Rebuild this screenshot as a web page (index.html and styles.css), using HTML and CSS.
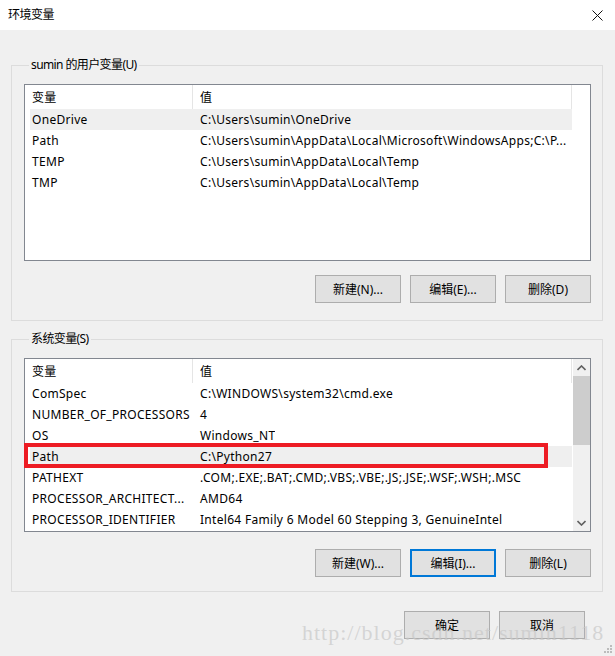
FILE: index.html
```html
<!DOCTYPE html>
<html lang="zh-CN">
<head>
    <meta charset="UTF-8">
    <meta name="viewport" content="width=device-width, initial-scale=1.0">
    <title>环境变量</title>
    <link rel="stylesheet" href="styles.css">
</head>
<body>
    <div class="titlebar">
        <span class="title">环境变量</span>
        <svg class="close" width="11" height="11" viewBox="0 0 11 11">
            <path d="M0.5 0.5 L10.5 10.5 M10.5 0.5 L0.5 10.5" stroke="#111" stroke-width="1" fill="none"/>
        </svg>
    </div>

    <div class="dialog">
        <fieldset class="group">
            <legend>sumin 的用户变量(U)</legend>
            <div class="list">
                <div class="list-main">
                    <div class="list-head">
                        <div class="col-name">变量</div>
                        <div class="col-value">值</div>
                    </div>
                    <div class="row selected"><div class="col-name">OneDrive</div><div class="col-value">C:\Users\sumin\OneDrive</div></div>
                    <div class="row"><div class="col-name">Path</div><div class="col-value">C:\Users\sumin\AppData\Local\Microsoft\WindowsApps;C:\P...</div></div>
                    <div class="row"><div class="col-name">TEMP</div><div class="col-value">C:\Users\sumin\AppData\Local\Temp</div></div>
                    <div class="row"><div class="col-name">TMP</div><div class="col-value">C:\Users\sumin\AppData\Local\Temp</div></div>
                </div>
                <div class="filler"></div>
            </div>
            <div class="buttons">
                <button class="btn">新建(N)...</button>
                <button class="btn">编辑(E)...</button>
                <button class="btn">删除(D)</button>
            </div>
        </fieldset>

        <fieldset class="group group-system">
            <legend>系统变量(S)</legend>
            <div class="list list-system">
                <div class="list-main">
                    <div class="list-head">
                        <div class="col-name">变量</div>
                        <div class="col-value">值</div>
                    </div>
                    <div class="row"><div class="col-name">ComSpec</div><div class="col-value">C:\WINDOWS\system32\cmd.exe</div></div>
                    <div class="row"><div class="col-name">NUMBER_OF_PROCESSORS</div><div class="col-value">4</div></div>
                    <div class="row"><div class="col-name">OS</div><div class="col-value">Windows_NT</div></div>
                    <div class="row selected"><div class="col-name">Path</div><div class="col-value">C:\Python27</div></div>
                    <div class="row"><div class="col-name">PATHEXT</div><div class="col-value">.COM;.EXE;.BAT;.CMD;.VBS;.VBE;.JS;.JSE;.WSF;.WSH;.MSC</div></div>
                    <div class="row"><div class="col-name">PROCESSOR_ARCHITECT...</div><div class="col-value">AMD64</div></div>
                    <div class="row"><div class="col-name">PROCESSOR_IDENTIFIER</div><div class="col-value">Intel64 Family 6 Model 60 Stepping 3, GenuineIntel</div></div>
                </div>
                <div class="scrollbar">
                    <div class="arrow">
                        <svg width="9" height="6" viewBox="0 0 9 6"><path d="M0.5 5 L4.5 1 L8.5 5" stroke="#606060" stroke-width="1.6" fill="none"/></svg>
                    </div>
                    <div class="thumb"></div>
                    <div class="track"></div>
                    <div class="arrow">
                        <svg width="9" height="6" viewBox="0 0 9 6"><path d="M0.5 1 L4.5 5 L8.5 1" stroke="#606060" stroke-width="1.6" fill="none"/></svg>
                    </div>
                </div>
                <div class="highlight"></div>
            </div>
            <div class="buttons">
                <button class="btn">新建(W)...</button>
                <button class="btn focused">编辑(I)...</button>
                <button class="btn">删除(L)</button>
            </div>
        </fieldset>

        <div class="buttons footer">
            <button class="btn">确定</button>
            <button class="btn">取消</button>
        </div>
    </div>

    <div class="watermark">http://blog.csdn.net/sumin1118</div>
    <svg class="grip" width="8" height="8" viewBox="0 0 8 8">
        <rect x="6" y="0" width="2" height="2" fill="#bcbcbc"/>
        <rect x="3" y="3" width="2" height="2" fill="#bcbcbc"/>
        <rect x="6" y="3" width="2" height="2" fill="#bcbcbc"/>
        <rect x="0" y="6" width="2" height="2" fill="#bcbcbc"/>
        <rect x="3" y="6" width="2" height="2" fill="#bcbcbc"/>
        <rect x="6" y="6" width="2" height="2" fill="#bcbcbc"/>
    </svg>
</body>
</html>
```

FILE: styles.css
```css
body {
    margin: 0;
    width: 615px;
    height: 656px;
    position: relative;
    overflow: hidden;
    background: #f0f0f0;
    font-family: "Noto Sans", "Noto Sans CJK SC", sans-serif;
    font-size: 12px;
    color: #000;
}

.titlebar {
    height: 30px;
    background: #fff;
    display: flex;
    justify-content: space-between;
    align-items: center;
    padding: 0 12px 0 8px;
}

.title {
    font-size: 12px;
    margin-top: -2px;
    letter-spacing: -0.5px;
}

.dialog {
    padding: 27px 12px 0 11px;
}

.group {
    margin: 0;
    padding: 11px 11px 17px 12px;
    border: 1px solid #dcdcdc;
    min-width: 0;
}

.group legend {
    padding: 0 2px;
    margin-left: 5px;
    line-height: 16px;
    letter-spacing: -0.6px;
}

.group-system {
    margin-top: 10px;
    padding-bottom: 14px;
}

.list {
    position: relative;
    display: flex;
    height: 175px;
    background: #fff;
    border: 1px solid #828790;
}

.list-system {
    height: 172px;
}

.list-main {
    width: 547px;
    overflow: hidden;
    letter-spacing: 0.3px;
}

.filler {
    flex: 1;
}

.list-head {
    display: flex;
    height: 24px;
    align-items: center;
    border-right: 1px solid #e5e5e5;
}

.list-head .col-name {
    border-right: 1px solid #e5e5e5;
    align-self: stretch;
    display: flex;
    align-items: center;
}

.col-name {
    width: 160px;
    padding-left: 7px;
    white-space: nowrap;
    overflow: hidden;
    flex: none;
}

.col-value {
    padding-left: 7px;
    white-space: nowrap;
    overflow: hidden;
}

.row {
    display: flex;
    align-items: center;
    height: 21px;
}

.row .col-name {
    width: 161px;
    padding-left: 2px;
    margin-left: 5px;
}

.row.selected {
    background: linear-gradient(to right, #fff 5px, #efefef 5px);
}

.scrollbar {
    width: 17px;
    display: flex;
    flex-direction: column;
    background: #f0f0f0;
    margin-left: auto;
}

.arrow {
    height: 17px;
    display: flex;
    justify-content: center;
    align-items: center;
}

.thumb {
    height: 69px;
    background: #cdcdcd;
}

.track {
    flex: 1;
}

.highlight {
    position: absolute;
    left: -1px;
    top: 84px;
    width: 516px;
    height: 17px;
    border: 4px solid #ed1c24;
}

.buttons {
    display: flex;
    justify-content: flex-end;
    gap: 9px;
    margin-top: 14px;
}

.group-system .buttons {
    margin-top: 17px;
}

.btn {
    width: 86px;
    height: 28px;
    padding: 0;
    background: #e1e1e1;
    border: 1px solid #adadad;
    font-family: inherit;
    font-size: 12px;
    color: #000;
}

.btn.focused {
    border: 2px solid #0078d7;
}

.footer {
    margin-top: 19px;
    padding-right: 18px;
}

.watermark {
    position: absolute;
    left: 302px;
    top: 620px;
    font-family: "Liberation Serif", serif;
    font-size: 22px;
    letter-spacing: 1px;
    color: rgba(200, 200, 200, 0.7);
    white-space: nowrap;
}

.grip {
    position: absolute;
    right: 3px;
    bottom: 3px;
}
```
